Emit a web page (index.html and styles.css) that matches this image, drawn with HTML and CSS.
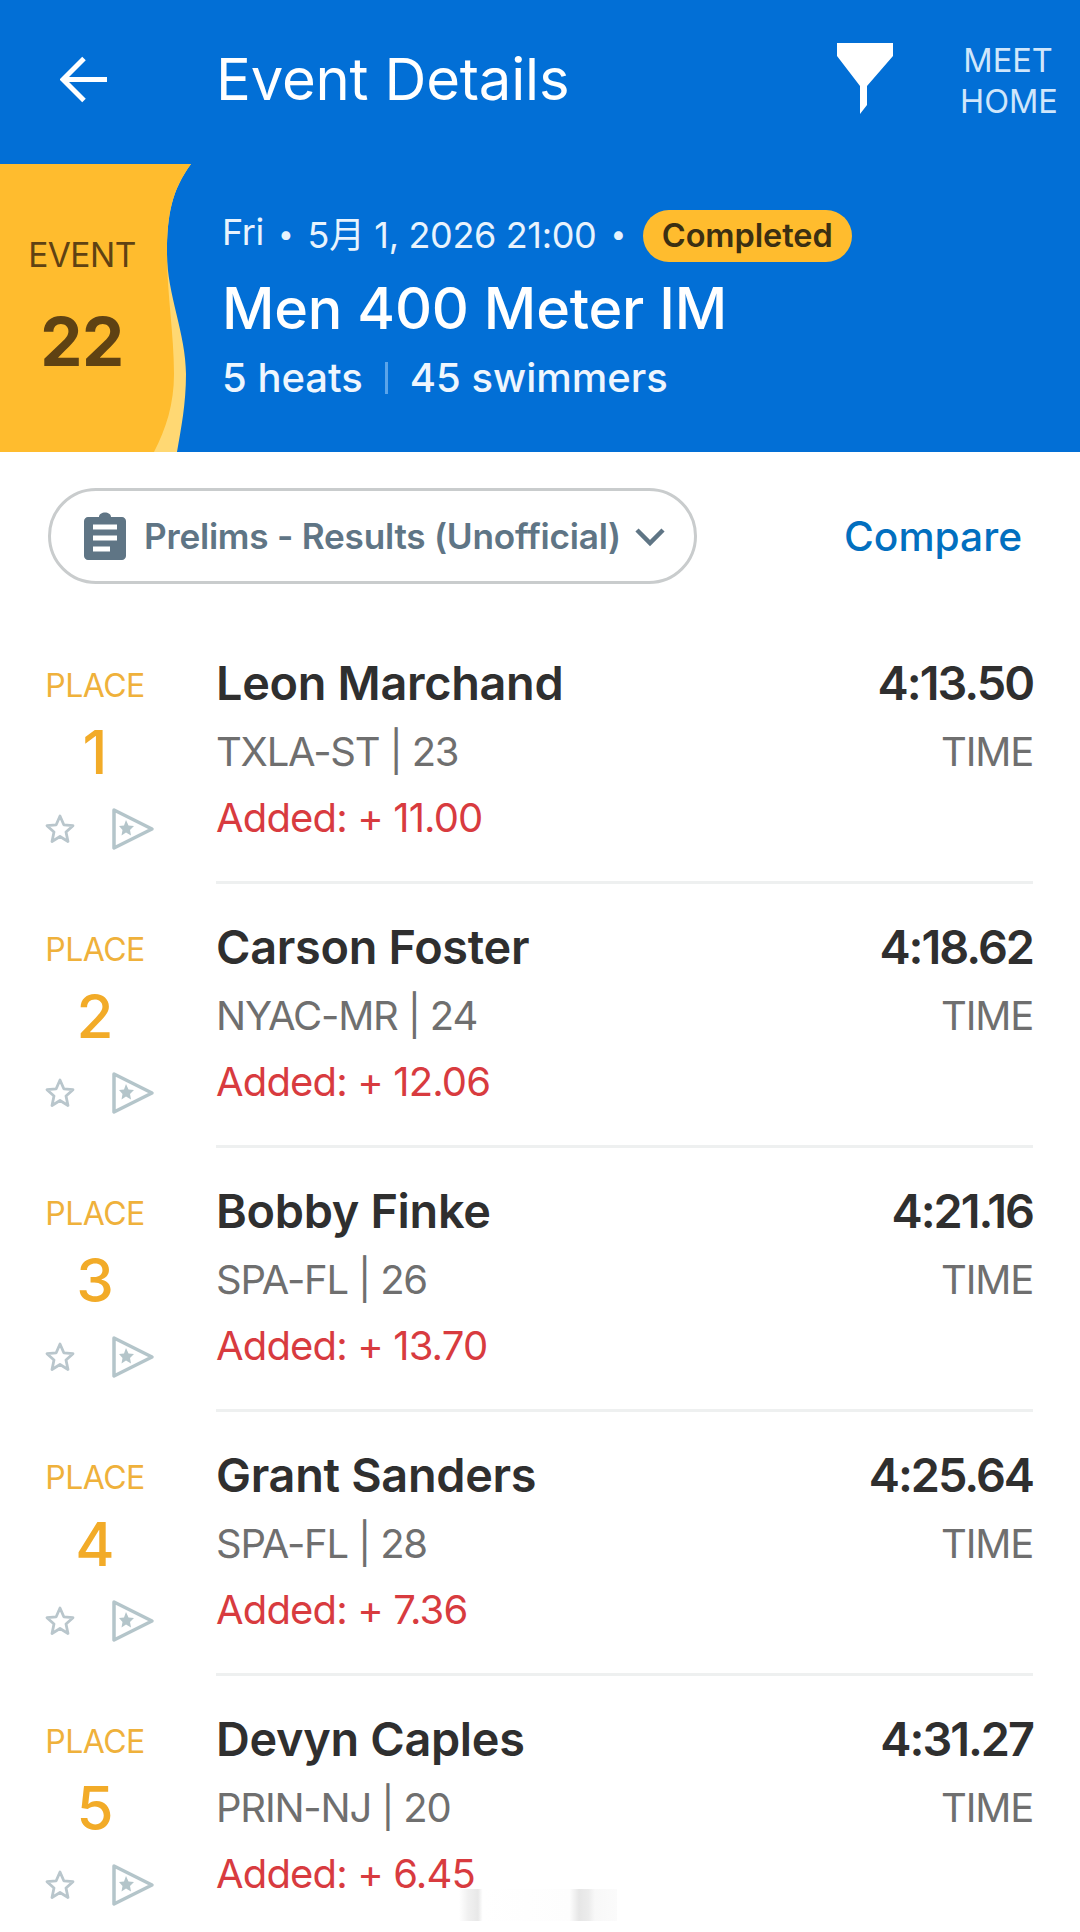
FILE: index.html
```html
<!DOCTYPE html>
<html lang="en">
<head>
<meta charset="utf-8">
<title>Event Details</title>
<link rel="stylesheet" href="styles.css">
</head>
<body>
<div class="page">
  <header class="hero">
    <div class="topbar">
      <svg class="back" viewBox="0 0 48 48" width="48" height="48"><path d="M24 2.500 3 23.500 24 44.500M3 23.500H47" fill="none" stroke="#fff" stroke-width="5"/></svg>
      <h1 class="title">Event Details</h1>
      <svg class="filter" viewBox="0 0 58 72" width="58" height="72"><path d="M1 0H57V13L31 43V62L24 71V43L1 13Z" fill="#fff"/></svg>
      <div class="home">MEET<br>HOME</div>
    </div>
    <div class="banner">
      <div class="badge">
        <svg class="wave" viewBox="0 0 192 288" width="192" height="288"><path d="M0 0H191C172 26 167 50 167 90C167 130 186 170 186 210C186 240 181 265 177 288H0Z" fill="#ffd873"/><path d="M0 0H191C172 26 167 50 167 90C167 130 174 170 174 210C174 240 166 265 154 288H0Z" fill="#ffbc2e"/></svg>
        <div class="event-label">EVENT</div>
        <div class="event-num">22</div>
      </div>
      <div class="info">
        <div class="meta"><span class="meta-text">Fri</span><span class="dot">•</span><span class="meta-text">5月 1, 2026 21:00</span><span class="dot">•</span><span class="pill">Completed</span></div>
        <div class="name">Men 400 Meter IM</div>
        <div class="counts"><span>5 heats</span><span class="sep"></span><span>45 swimmers</span></div>
      </div>
    </div>
  </header>

  <div class="controls">
    <div class="select">
      <svg class="clip" viewBox="0 0 42 48" width="42" height="48"><path d="M4 5H15C15 -1 27 -1 27 5H38C40 5 42 7 42 9V44C42 46 40 48 38 48H4C2 48 0 46 0 44V9C0 7 2 5 4 5Z" fill="#5f7585"/><path d="M9 15H33M9 26H33M9 37H26" stroke="#fff" stroke-width="5" fill="none"/></svg>
      <span class="select-text">Prelims - Results (Unofficial)</span>
      <svg class="chev" viewBox="0 0 30 20" width="30" height="20"><path d="M2 3 15 16 28 3" fill="none" stroke="#5f7585" stroke-width="4.500"/></svg>
    </div>
    <div class="compare">Compare</div>
  </div>

  <main class="list">
    <article class="row">
      <div class="place">
        <div class="place-label">PLACE</div>
        <div class="place-num">1</div>
        <div class="icons">
          <svg class="star" viewBox="0 0 32 32" width="32" height="32"><path d="M16 3 19.800 11.800 29 12.700 22 19 24 28.500 16 23.500 8 28.500 10 19 3 12.700 12.200 11.800Z" fill="none" stroke="#b9c6cc" stroke-width="2.800" stroke-linejoin="round"/></svg>
          <svg class="flag" viewBox="0 0 44 44" width="44" height="44"><path d="M3 3 41 22 3 41Z" fill="none" stroke="#b4c5ca" stroke-width="3.500" stroke-linejoin="round"/><path d="M15 13 17.500 18.500 23 19 19 23 20 28.500 15 25.500 10.500 28.500 11.500 23 8 19 13 18.500Z" fill="#b4c5ca"/></svg>
        </div>
      </div>
      <div class="detail">
        <div class="line-top"><span class="swimmer">Leon Marchand</span><span class="time">4:13.50</span></div>
        <div class="line-mid"><span>TXLA-ST | 23</span><span>TIME</span></div>
        <div class="added">Added: + 11.00</div>
      </div>
    </article>
    <article class="row">
      <div class="place">
        <div class="place-label">PLACE</div>
        <div class="place-num">2</div>
        <div class="icons">
          <svg class="star" viewBox="0 0 32 32" width="32" height="32"><path d="M16 3 19.800 11.800 29 12.700 22 19 24 28.500 16 23.500 8 28.500 10 19 3 12.700 12.200 11.800Z" fill="none" stroke="#b9c6cc" stroke-width="2.800" stroke-linejoin="round"/></svg>
          <svg class="flag" viewBox="0 0 44 44" width="44" height="44"><path d="M3 3 41 22 3 41Z" fill="none" stroke="#b4c5ca" stroke-width="3.500" stroke-linejoin="round"/><path d="M15 13 17.500 18.500 23 19 19 23 20 28.500 15 25.500 10.500 28.500 11.500 23 8 19 13 18.500Z" fill="#b4c5ca"/></svg>
        </div>
      </div>
      <div class="detail">
        <div class="line-top"><span class="swimmer">Carson Foster</span><span class="time">4:18.62</span></div>
        <div class="line-mid"><span>NYAC-MR | 24</span><span>TIME</span></div>
        <div class="added">Added: + 12.06</div>
      </div>
    </article>
    <article class="row">
      <div class="place">
        <div class="place-label">PLACE</div>
        <div class="place-num">3</div>
        <div class="icons">
          <svg class="star" viewBox="0 0 32 32" width="32" height="32"><path d="M16 3 19.800 11.800 29 12.700 22 19 24 28.500 16 23.500 8 28.500 10 19 3 12.700 12.200 11.800Z" fill="none" stroke="#b9c6cc" stroke-width="2.800" stroke-linejoin="round"/></svg>
          <svg class="flag" viewBox="0 0 44 44" width="44" height="44"><path d="M3 3 41 22 3 41Z" fill="none" stroke="#b4c5ca" stroke-width="3.500" stroke-linejoin="round"/><path d="M15 13 17.500 18.500 23 19 19 23 20 28.500 15 25.500 10.500 28.500 11.500 23 8 19 13 18.500Z" fill="#b4c5ca"/></svg>
        </div>
      </div>
      <div class="detail">
        <div class="line-top"><span class="swimmer">Bobby Finke</span><span class="time">4:21.16</span></div>
        <div class="line-mid"><span>SPA-FL | 26</span><span>TIME</span></div>
        <div class="added">Added: + 13.70</div>
      </div>
    </article>
    <article class="row">
      <div class="place">
        <div class="place-label">PLACE</div>
        <div class="place-num">4</div>
        <div class="icons">
          <svg class="star" viewBox="0 0 32 32" width="32" height="32"><path d="M16 3 19.800 11.800 29 12.700 22 19 24 28.500 16 23.500 8 28.500 10 19 3 12.700 12.200 11.800Z" fill="none" stroke="#b9c6cc" stroke-width="2.800" stroke-linejoin="round"/></svg>
          <svg class="flag" viewBox="0 0 44 44" width="44" height="44"><path d="M3 3 41 22 3 41Z" fill="none" stroke="#b4c5ca" stroke-width="3.500" stroke-linejoin="round"/><path d="M15 13 17.500 18.500 23 19 19 23 20 28.500 15 25.500 10.500 28.500 11.500 23 8 19 13 18.500Z" fill="#b4c5ca"/></svg>
        </div>
      </div>
      <div class="detail">
        <div class="line-top"><span class="swimmer">Grant Sanders</span><span class="time">4:25.64</span></div>
        <div class="line-mid"><span>SPA-FL | 28</span><span>TIME</span></div>
        <div class="added">Added: + 7.36</div>
      </div>
    </article>
    <article class="row">
      <div class="place">
        <div class="place-label">PLACE</div>
        <div class="place-num">5</div>
        <div class="icons">
          <svg class="star" viewBox="0 0 32 32" width="32" height="32"><path d="M16 3 19.800 11.800 29 12.700 22 19 24 28.500 16 23.500 8 28.500 10 19 3 12.700 12.200 11.800Z" fill="none" stroke="#b9c6cc" stroke-width="2.800" stroke-linejoin="round"/></svg>
          <svg class="flag" viewBox="0 0 44 44" width="44" height="44"><path d="M3 3 41 22 3 41Z" fill="none" stroke="#b4c5ca" stroke-width="3.500" stroke-linejoin="round"/><path d="M15 13 17.500 18.500 23 19 19 23 20 28.500 15 25.500 10.500 28.500 11.500 23 8 19 13 18.500Z" fill="#b4c5ca"/></svg>
        </div>
      </div>
      <div class="detail">
        <div class="line-top"><span class="swimmer">Devyn Caples</span><span class="time">4:31.27</span></div>
        <div class="line-mid"><span>PRIN-NJ | 20</span><span>TIME</span></div>
        <div class="added">Added: + 6.45</div>
      </div>
    </article>
  </main>
  <div class="smudge"></div>
</div>
</body>
</html>
```

FILE: styles.css
```css
* { box-sizing: border-box; margin: 0; padding: 0; }
html, body { width: 1080px; height: 1932px; overflow: hidden; background: #fff; }
body { font-family: Inter, "Noto Sans CJK SC", sans-serif; }
.page { position: relative; width: 1080px; height: 1932px; overflow: hidden; }

.hero { height: 452px; background: #026fd6; color: #fff; display: flex; flex-direction: column; flex: none; }
.topbar { height: 164px; display: flex; align-items: center; padding-left: 60px; flex: none; }
.back { flex: none; margin-top: -4px; }
.title { font-size: 58px; font-weight: 400; margin-left: 108px; width: 620px; letter-spacing: -0.2px; margin-top: -6px; flex: none; }
.filter { flex: none; margin-top: -6px; }
.home { font-size: 32.500px; line-height: 41px; color: #cfe6fb; text-align: center; width: 96px; margin-left: 66px; margin-top: -3px; flex: none; }

.banner { flex: 1; display: flex; }
.badge { position: relative; width: 222px; flex: none; display: flex; flex-direction: column; align-items: flex-start; }
.wave { position: absolute; left: 0; top: 0; }
.event-label, .event-num { position: relative; color: #5f4213; width: 164px; text-align: center; }
.event-label { font-size: 33.500px; margin-top: 69px; line-height: 44px; letter-spacing: -0.5px; }
.event-num { font-size: 67px; font-weight: 700; line-height: 80px; margin-top: 25px; letter-spacing: -0.5px; }
.info { display: flex; flex-direction: column; }
.meta { display: flex; align-items: center; margin-top: 48px; height: 48px; font-size: 36px; color: #e8f3fd; letter-spacing: -0.35px; }
.meta-text { padding-bottom: 9px; }
.dot { margin: 0 14px; font-size: 28px; padding-bottom: 4px; }
.pill { background: #ffbc2e; color: #3b2f12; font-size: 32.500px; font-weight: 600; height: 52px; line-height: 52px; padding: 0 19px; margin-left: 3px; border-radius: 26px; letter-spacing: -0.1px; }
.name { font-size: 57.500px; font-weight: 500; line-height: 70px; margin-top: 13px; letter-spacing: -0.2px; }
.counts { display: flex; align-items: center; font-size: 40px; font-weight: 500; line-height: 50px; margin-top: 10px; color: #eef6fe; }
.sep { width: 3px; height: 32px; background: #5aa4ea; margin: 0 22px; }

.controls { display: flex; align-items: center; height: 168px; padding-left: 48px; flex: none; padding-top: 36px; padding-bottom: 36px; }
.select { display: flex; align-items: center; width: 649px; height: 96px; border: 3px solid #c9cccd; border-radius: 48px; padding-left: 33px; flex: none; }
.clip { flex: none; }
.select-text { font-size: 35.200px; font-weight: 600; color: #5f7585; margin-left: 18px; letter-spacing: -0.25px; }
.chev { flex: none; margin-left: 14px; margin-top: 2px; }
.compare { font-size: 40.700px; font-weight: 500; color: #026fbf; margin-left: 147px; }

.list { display: flex; flex-direction: column; }
.row { height: 264px; display: grid; grid-template-columns: 216px 1fr; padding-right: 47px; flex: none; }
.place { display: flex; flex-direction: column; align-items: center; width: 190px; padding-top: 47px; }
.place-label { font-size: 32px; line-height: 38px; color: #efb13b; width: 100px; text-align: center; letter-spacing: -0.5px; }
.place-num { font-size: 60px; font-weight: 500; line-height: 72px; color: #f2ab28; margin-top: 11px; }
.icons { display: flex; align-items: center; gap: 35px; margin-top: 19px; margin-left: 44px; align-self: flex-start; }
.detail { border-bottom: 3px solid #eef0f0; padding-top: 33px; }
.line-top, .line-mid { display: flex; justify-content: space-between; }
.line-top { height: 60px; align-items: center; }
.swimmer { font-size: 46.800px; font-weight: 600; color: #2f2f2f; letter-spacing: -0.3px; }
.time { font-size: 46.800px; font-weight: 600; color: #2f2f2f; letter-spacing: -2px; }
.line-mid { font-size: 40px; color: #6f6f6f; line-height: 50px; margin-top: 14px; letter-spacing: -1.200px; }
.added { font-size: 40px; color: #d83b3f; line-height: 50px; margin-top: 16px; letter-spacing: -0.85px; }

.smudge { position: absolute; left: 459px; top: 1889px; width: 158px; height: 32px; background: linear-gradient(90deg, rgba(255,255,255,0) 0, #f0f0f0 6%, #e8e8e8 12%, #fff 15%, #fdfdfd 70%, #e6e6e6 76%, #ececec 82%, #f8f8f8 86%, #fbfbfb 100%); }
```
